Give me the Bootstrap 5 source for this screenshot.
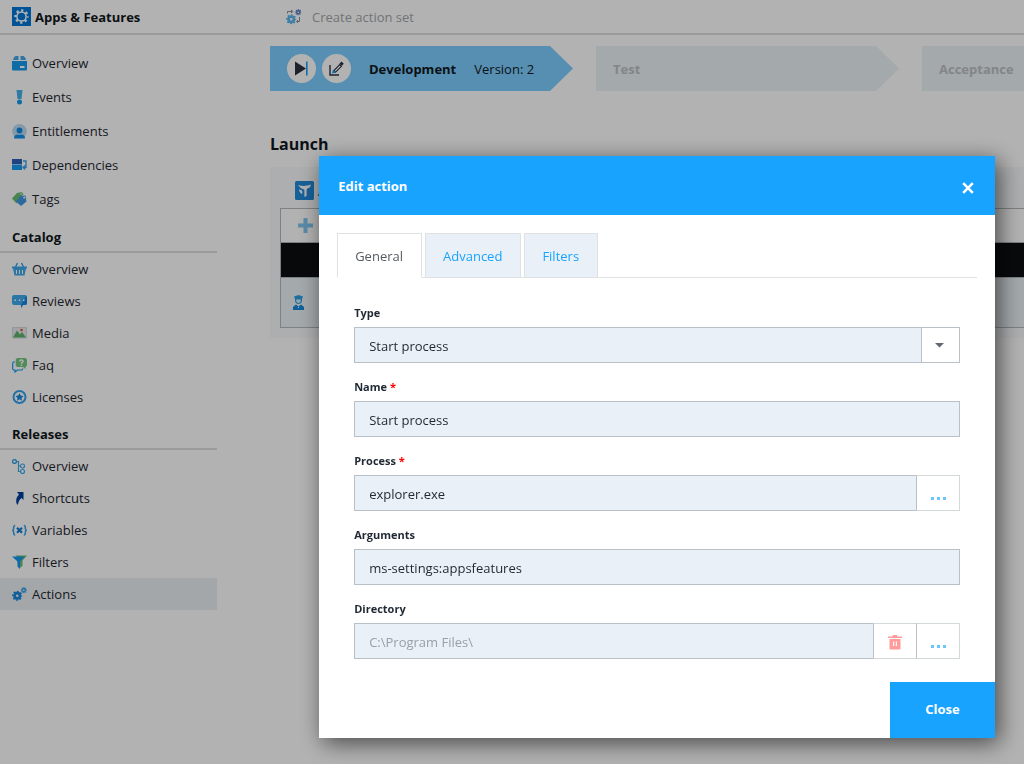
<!DOCTYPE html>
<html lang="en">
<head>
<meta charset="utf-8">
<meta name="viewport" content="width=device-width, initial-scale=1">
<title>Apps &amp; Features - Actions</title>
<link href="https://cdn.jsdelivr.net/npm/bootstrap@5.3.0/dist/css/bootstrap.min.css" rel="stylesheet">
<style>
  :root { --accent: #18a3ff; --line: #dcdfe0; --field: #e9f0f7; --ink: #1f2833; }
  body { font: 13px/20px "Open Sans", "Noto Sans", sans-serif; color: var(--ink); background: #fff; overflow: hidden; }
  .shell { min-height: 100vh; }
  .topbar { height: 35px; border-bottom: 2px solid var(--line); }
  .app-title { width: 217px; padding-left: 12px; gap: 4px; font-size: 13px; font-weight: 700; color: #101820; }
  .create-btn { margin-left: 69px; gap: 10px; font-size: 13px; line-height: 20px; color: #a3a7ab; }
  .create-btn svg { opacity: .8; }
  .sidebar { width: 217px; padding-top: 11px; }
  .sidebar .nav-link { height: 32px; padding: 0 12px; gap: 5px; font-size: 13px; color: var(--ink); }
  .sidebar .nav-main .nav-link { height: 34px; }
  .sidebar .nav-link.active { background: #ebeff2; }
  .sidebar h2 { height: 37px; margin: 0; padding: 11px 12px 0; font-size: 13px; line-height: 20px; font-weight: 700; color: #101820; border-bottom: 2px solid var(--line); }
  .sidebar svg { width: 15px; height: 15px; flex: none; }
  .workspace { min-width: 0; padding: 11px 0 0 53px; overflow: hidden; }
  .stages { gap: 23px; }
  .stage { flex: 0 0 303px; height: 45px; padding: 0 17px; background: #ebf2f6; color: #bcc0c4; font-weight: 700; clip-path: polygon(0 0, calc(100% - 23px) 0, 100% 50%, calc(100% - 23px) 100%, 0 100%); }
  .stage.current { background: #7ccdff; color: #101820; }
  .stage-actions { gap: 6px; margin-right: 18px; }
  .stage-name { margin-right: 18px; }
  .round-btn { width: 29px; height: 29px; border-radius: 50%; background: #fff; border: 0; padding: 0; }
  .launch-title { margin: 41px 0 0; font-size: 16px; line-height: 24px; font-weight: 700; color: #101820; }
  .action-set { margin-top: 11px; padding: 0 0 10px 10px; background: #f8fafb; }
  .set-head { height: 41px; padding: 6px 15px 0; gap: 4px; font-weight: 700; }
  .set-rows { border: 1px solid #b4b9bc; border-right: 0; }
  .set-rows > div { padding-left: 17px; border-bottom: 1px solid #b4b9bc; }
  .row-add { height: 34px; background: #fff; }
  .row-dark { height: 35px; background: #0b0e11; }
  .set-rows > .row-user { height: 49px; padding-left: 10px; background: #ebf2f6; border-bottom: 0; }
  .modal-backdrop { --bs-backdrop-opacity: .3; }
  .modal-dialog { width: 66%; max-width: 100%; margin: 156px 29px 0 auto; }
  .modal-content { border: 0; border-radius: 0; color: var(--ink); box-shadow: 4px 5px 22px rgba(0,0,0,.6); }
  .modal-header { height: 59px; padding: 0 19px; border: 0; border-radius: 0; background: var(--accent); color: #fff; }
  .modal-title { font-size: 13px; line-height: 20px; font-weight: 700; }
  .x-btn { width: 16px; height: 16px; padding: 0; border: 0; background: none; margin-top: 5px; color: #fff; }
  .modal-body { padding: 18px 18px 7px; }
  .nav-tabs { gap: 3px; border-bottom: 1px solid #dee2e4; }
  .nav-tabs .nav-link { height: 45px; padding: 0 18px 0 17px; border: 1px solid #dee2e4; border-radius: 0; background: var(--field); color: var(--accent); font-size: 13px; }
  .nav-tabs .nav-link.active { background: #fff; color: #555b60; border-color: #dee2e4 #dee2e4 #fff; }
  .tab-fields { padding: 27px 17px 0; }
  .field { margin-bottom: 16px; }
  .field label { display: block; height: 16px; margin-bottom: 6px; font-size: 11px; line-height: 16px; font-weight: 700; }
  .field label span { color: #f00; }
  .field .form-control, .field .form-select { height: 36px; padding: 1px 14px 0; border: 1px solid #b9c1c6; border-radius: 0; background-color: var(--field); color: var(--ink); font-size: 13px; line-height: 20px; }
  .field .form-control::placeholder { color: #9aa0a5; }
  .field .form-select { background-image: url("data:image/svg+xml,%3Csvg xmlns='http://www.w3.org/2000/svg' viewBox='0 0 38 34'%3E%3Cpath fill='%23fff' d='M1 0h37v34H1z'/%3E%3Cpath fill='%23b9c1c6' d='M0 0h1v34H0z'/%3E%3Cpath fill='%23616870' d='M14 15h9l-4.500 4.500z'/%3E%3C/svg%3E"); background-size: 38px 34px; background-position: right center; }
  .side-btn { width: 44px; padding: 0; border: 1px solid #d3d8db; border-left-color: #b9c1c6; border-radius: 0; background: #fff; }
  .modal-footer { padding: 0; border: 0; }
  .close-btn { width: 105px; height: 56px; margin: 0; border: 0; border-radius: 0; background: var(--accent); color: #fff; font-size: 13px; font-weight: 700; }
</style>
</head>
<body>
<svg class="d-none" aria-hidden="true">
  <symbol id="cog" viewBox="0 0 16 16"><g fill="none" stroke="currentColor"><circle cx="8" cy="8" r="4" stroke-width="4"/><circle cx="8" cy="8" r="6.500" stroke-width="2.600" stroke-dasharray="2.700 2.405" stroke-dashoffset="1.350"/></g></symbol>
</svg>

<div class="shell d-flex flex-column">
  <header class="topbar d-flex align-items-center">
    <div class="app-title d-flex align-items-center">
      <svg width="19" height="19" viewBox="0 0 19 19"><path fill="#0078d7" d="M0 0h19v19H0z"/><g fill="none" stroke="#fff"><circle cx="9.500" cy="9.500" r="4.600" stroke-width="1.500"/><circle cx="9.500" cy="9.500" r="6" stroke-width="2.400" stroke-dasharray="2.200 2.512" stroke-dashoffset="1.100"/></g></svg>
      <span>Apps &amp; Features</span>
    </div>
    <button class="create-btn btn p-0 border-0 d-flex align-items-center" type="button">
      <svg width="16" height="16" viewBox="0 0 16 16"><use href="#cog" x="0" y="5" width="10.500" height="10.500" color="#35a6ea"/><use href="#cog" x="9" y="0" width="6.500" height="6.500" color="#3667b8"/><path d="M1.500 4.500v-2h4.500M5 1l2 1.500L5 4M13.500 8v4.500H11M12 11l-1.500 1.500L12 14" fill="none" stroke="#6b737c"/></svg>
      Create action set
    </button>
  </header>

  <div class="d-flex flex-grow-1">
    <nav class="sidebar flex-shrink-0" aria-label="Application">
      <div class="nav nav-main flex-column">
        <a class="nav-link d-flex align-items-center" href="#"><svg viewBox="0 0 15 15"><path fill="#45a7e9" d="M3.500 0h3v4H1q.5-3 2.500-4zM8.500 0h3q2 1 2.500 4H8.500z"/><path fill="#179bef" d="M0 5h15v8.500a1 1 0 0 1-1 1H1a1 1 0 0 1-1-1z"/><path fill="#fff" d="M8 10h4.500v2H8z"/></svg>Overview</a>
        <a class="nav-link d-flex align-items-center" href="#"><svg viewBox="0 0 15 15"><path fill="#45b0ee" d="M4.500 0h6l-1 9h-4z"/><circle cx="7.500" cy="12" r="2.500" fill="#179bef"/></svg>Events</a>
        <a class="nav-link d-flex align-items-center" href="#"><svg viewBox="0 0 15 15"><circle cx="7.500" cy="7.300" r="7.300" fill="#bcdcf2"/><circle cx="7.500" cy="6.500" r="2.900" fill="#1487df"/><path fill="#1493ea" d="M2 14.500c0-3 1.500-4 3.500-4l2 .5 2-.5c2 0 3.500 1 3.500 4z"/></svg>Entitlements</a>
        <a class="nav-link d-flex align-items-center" href="#"><svg viewBox="0 0 15 15"><path fill="#2e60b8" d="M0 1h10v5H0z"/><path fill="#179bef" d="M0 6.500h10V12H0z"/><path d="M11 3h3v6.500h-2.500M13 7.500l-2 2 2 2" fill="none" stroke="#379fe9" stroke-width="1.300"/></svg>Dependencies</a>
        <a class="nav-link d-flex align-items-center" href="#"><svg viewBox="0 0 15 15"><path fill="#68bd73" d="M5 1 9.500 0l2 2-7 9.500L0 6.500z"/><path fill="#3e97e4" d="M8.500 4 13.500 3.500l1 6L9 14 4 9.500z"/><circle cx="9" cy="2" r=".8" fill="#fff"/><circle cx="12.200" cy="5.500" r="1" fill="#fff"/></svg>Tags</a>
      </div>
      <h2>Catalog</h2>
      <div class="nav flex-column">
        <a class="nav-link d-flex align-items-center" href="#"><svg viewBox="0 0 15 15"><path d="M3 6l2.500-5M12 6 9.500 1" stroke="#2f9fe8" stroke-width="1.400"/><path fill="#40a9eb" fill-rule="evenodd" d="M0 4.500h15v2h-1l-1.500 7h-10L1 6.500H0zM4 8v4h1V8zm3 0v4h1V8zm3 0v4h1V8z"/></svg>Overview</a>
        <a class="nav-link d-flex align-items-center" href="#"><svg viewBox="0 0 15 15"><path fill="#40a9ee" d="M2 1h11a2 2 0 0 1 2 2v6a2 2 0 0 1-2 2h-2l-2 3V11H2a2 2 0 0 1-2-2V3a2 2 0 0 1 2-2z"/><path fill="#1288e0" d="M15 3v6a2 2 0 0 1-2 2h-2l-2 3V11l5-9z"/><path fill="#fff" d="M2.500 5.500H4V7H2.500zM6.800 5.500h1.500V7H6.800zM11 5.500h1.500V7H11z"/></svg>Reviews</a>
        <a class="nav-link d-flex align-items-center" href="#"><svg viewBox="0 0 15 15"><path fill="#e7eaeb" stroke="#d2dadd" d="M.5 1.500h14v10.500H.5z"/><path fill="#5db46b" d="m1 11.500 4-7 3 4 2-2.500 4 5.500z"/><circle cx="9.500" cy="4" r="1.300" fill="#f05248"/></svg>Media</a>
        <a class="nav-link d-flex align-items-center" href="#"><svg viewBox="0 0 15 15"><path d="M3 4H1.500L.7 5v6l.8 1H3v2l2.500-2H10l1-1.500" fill="none" stroke="#159bf1" stroke-width="1.200"/><path fill="#76c682" d="M5 0h8.500L15 1.500v6L13.500 9v2L11 9H5L3.700 7.500v-6z"/><path d="M7.700 3.500q0-1.500 1.700-1.500T11 3.500q0 .8-1.500 1.700v.5" fill="none" stroke="#fff" stroke-width="1.400"/><path fill="#fff" d="M8.800 6.500h1.400v1.400H8.800z"/></svg>Faq</a>
        <a class="nav-link d-flex align-items-center" href="#"><svg viewBox="0 0 15 15"><circle cx="7.500" cy="7" r="6" fill="none" stroke="#32a3eb" stroke-width="2"/><path fill="#1686dc" d="m7.500 3.100 1.200 2.500 2.800.4-2 1.900.5 2.800-2.500-1.400L5 10.700l.5-2.800-2-1.900 2.800-.4z"/></svg>Licenses</a>
      </div>
      <h2>Releases</h2>
      <div class="nav flex-column">
        <a class="nav-link d-flex align-items-center" href="#"><svg viewBox="0 0 15 15" fill="none" stroke="#41a8e9" stroke-width="1.200"><circle cx="2.500" cy="2.500" r="1.900" stroke="#1795e8"/><circle cx="10.500" cy="7" r="2"/><circle cx="10.500" cy="12.500" r="2"/><path d="M4.500 2.500H6.500v10h2M6.500 7h2"/></svg>Overview</a>
        <a class="nav-link d-flex align-items-center" href="#"><svg viewBox="0 0 15 15"><path fill="#003f9e" d="M5 1h6.500v8L9.500 7Q6.500 9 6 13.500H5Q2.500 8 7 3.500z"/></svg>Shortcuts</a>
        <a class="nav-link d-flex align-items-center" href="#"><svg viewBox="0 0 15 15" fill="none"><path d="M3.200 2.500Q1.500 2.500 1.700 5 1.800 7 .3 7.200 1.800 7.500 1.700 9.500q-.2 2.500 1.500 2.500M11.800 2.500q1.700 0 1.500 2.500-.1 2 1.400 2.200-1.500.3-1.400 2.300.2 2.500-1.500 2.500" stroke="#39a5eb" stroke-width="1.600"/><path d="M5 4.700l5 5M10 4.700l-5 5" stroke="#147cd4" stroke-width="2.200"/></svg>Variables</a>
        <a class="nav-link d-flex align-items-center" href="#"><svg viewBox="0 0 15 15"><path fill="#6bbd77" d="M4 .5h11L10.500 5.500V11L7 13.500z"/><path fill="#159aef" d="M0 1.500h12.500L8 6.500V14l-2.500-2.500v-5z"/></svg>Filters</a>
        <a class="nav-link active d-flex align-items-center" href="#" aria-current="page"><svg viewBox="0 0 15 15"><use href="#cog" x="0" y="3.500" width="10.500" height="10.500" color="#1788df"/><use href="#cog" x="8.500" y="0" width="6.500" height="6.500" color="#44a5e8"/></svg>Actions</a>
      </div>
    </nav>

    <main class="workspace flex-grow-1">
      <div class="stages d-flex">
        <div class="stage current d-flex align-items-center">
          <div class="stage-actions d-flex">
            <button class="round-btn d-flex align-items-center justify-content-center" type="button" aria-label="Promote"><svg width="15" height="15" viewBox="0 0 15 15"><path fill="#29313f" d="M1 .5 12 7.500 1 14.500z"/><path fill="#17a0f5" d="M12 .5h1.600v14H12z"/></svg></button>
            <button class="round-btn d-flex align-items-center justify-content-center" type="button" aria-label="Edit stage"><svg width="15" height="15" viewBox="0 0 15 15"><path d="M1 4v10h9" fill="none" stroke="#29313f" stroke-width="1.400"/><path d="m4.700 9.800 6-6.200 1.700 1.700-6 6z" fill="#fff" stroke="#29313f" stroke-width="1.200"/><path fill="#29313f" d="m10.500 2.500 2-2 2.300 2.300-2 2z"/><path fill="#189ff2" d="m4 8.500-1 4L7 11.500z"/></svg></button>
          </div>
          <span class="stage-name">Development</span><span class="fw-normal">Version: 2</span>
        </div>
        <div class="stage d-flex align-items-center">Test</div>
        <div class="stage d-flex align-items-center">Acceptance</div>
      </div>
      <h1 class="launch-title">Launch</h1>
      <section class="action-set">
        <div class="set-head d-flex align-items-center">
          <svg width="19" height="19" viewBox="0 0 19 19"><rect width="19" height="19" rx="1.500" fill="#208bdc"/><path fill="#fff" d="M3 4Q9.500 6 16 3.500L15 6.200Q12 7 11.600 8.500V15L9.400 16V8.800Q5 7.500 3 4zM4 8.200 7.300 9.800V13Q4.200 12 4 8.200z"/></svg>
          <span>A</span>
        </div>
        <div class="set-rows">
          <div class="row-add d-flex align-items-center"><svg width="15" height="15" viewBox="0 0 15 15"><path fill="#80c7ef" d="M5.500 0h4v5.500H15v4H9.500V15h-4V9.500H0v-4h5.500z"/></svg></div>
          <div class="row-dark"></div>
          <div class="row-user d-flex align-items-center"><svg width="15" height="15" viewBox="0 0 15 15"><path fill="#2d9ee5" d="M3 1.500 7.500 0 12 1.500 11 4v2q-.5 3-3.500 3T4 6V4z"/><path fill="#d9eef9" d="M5.200 4.500h4.600V6Q9.500 8 7.500 8T5.200 6z"/><path fill="#138ae0" d="M2 15v-3l3-2.500 2.500 2L10 9.500l3 2.500v3z"/><path fill="#fff" d="M7 12h1v1H7z"/></svg></div>
        </div>
      </section>
    </main>
  </div>
</div>

<div class="modal-backdrop show"></div>
<div class="modal show d-block" tabindex="-1" role="dialog" aria-modal="true" aria-labelledby="edit-title">
  <div class="modal-dialog">
    <div class="modal-content">
      <div class="modal-header">
        <h2 class="modal-title" id="edit-title">Edit action</h2>
        <button class="x-btn d-flex align-items-center justify-content-center" type="button" aria-label="Close dialog"><svg width="12" height="12" viewBox="0 0 12 12"><path d="m1.200 1.200 9.600 9.600m0-9.600-9.600 9.600" stroke="currentColor" stroke-width="2.600"/></svg></button>
      </div>
      <div class="modal-body">
        <div class="nav nav-tabs" role="tablist">
          <button class="nav-link active" type="button" role="tab" aria-selected="true">General</button>
          <button class="nav-link" type="button" role="tab" aria-selected="false">Advanced</button>
          <button class="nav-link" type="button" role="tab" aria-selected="false">Filters</button>
        </div>
        <form class="tab-fields">
          <div class="field">
            <label for="type">Type</label>
            <select class="form-select" id="type"><option>Start process</option></select>
          </div>
          <div class="field">
            <label for="name">Name <span>*</span></label>
            <input class="form-control" id="name" type="text" value="Start process">
          </div>
          <div class="field">
            <label for="process">Process <span>*</span></label>
            <div class="input-group">
              <input class="form-control" id="process" type="text" value="explorer.exe">
              <button class="btn side-btn" type="button" aria-label="Browse process"><svg width="15" height="12" viewBox="0 0 15 12"><path fill="#6cc4f8" d="M0 8h3v3H0zM6 8h3v3H6zM12 8h3v3h-3z"/></svg></button>
            </div>
          </div>
          <div class="field">
            <label for="arguments">Arguments</label>
            <input class="form-control" id="arguments" type="text" value="ms-settings:appsfeatures">
          </div>
          <div class="field">
            <label for="directory">Directory</label>
            <div class="input-group">
              <input class="form-control" id="directory" type="text" placeholder="C:\Program Files\">
              <button class="btn side-btn" type="button" aria-label="Clear directory"><svg width="14" height="15" viewBox="0 0 14 15"><path fill="#ff9b9b" fill-rule="evenodd" d="M0 1.500h4.500L5 0h4l.5 1.500H14V3H0zM1.500 4h11v9.500a1 1 0 0 1-1 1h-9a1 1 0 0 1-1-1zM5 6.500V11h1.200V6.500zm2.800 0V11H9V6.500z"/></svg></button>
              <button class="btn side-btn" type="button" aria-label="Browse directory"><svg width="15" height="12" viewBox="0 0 15 12"><path fill="#6cc4f8" d="M0 8h3v3H0zM6 8h3v3H6zM12 8h3v3h-3z"/></svg></button>
            </div>
          </div>
        </form>
      </div>
      <div class="modal-footer">
        <button class="btn close-btn" type="button">Close</button>
      </div>
    </div>
  </div>
</div>
<script src="https://cdn.jsdelivr.net/npm/bootstrap@5.3.0/dist/js/bootstrap.bundle.min.js"></script>
</body>
</html>
